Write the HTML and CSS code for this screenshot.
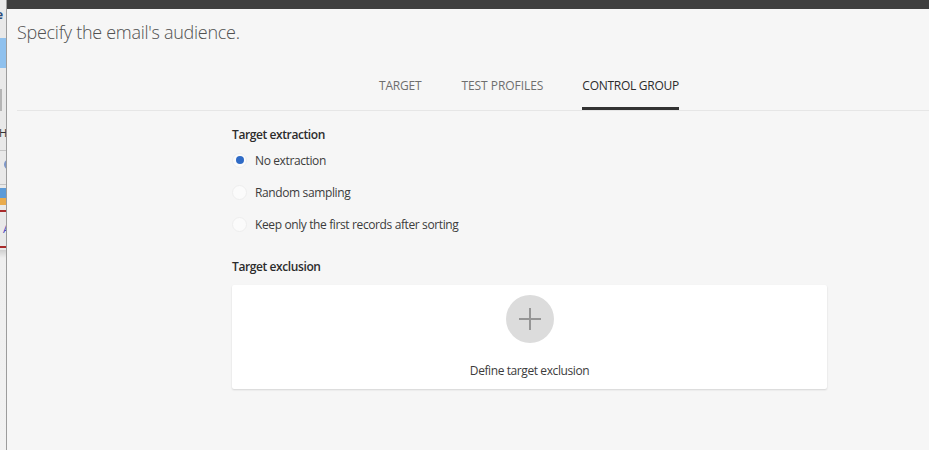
FILE: index.html
```html
<!DOCTYPE html>
<html lang="en">
<head>
<meta charset="utf-8">
<title>Specify the email's audience</title>
<link rel="stylesheet" href="styles.css">
</head>
<body>
<div class="page">
  <aside class="behind">
    <span class="b-glyph b-e">e</span>
    <div class="b-blue"></div>
    <div class="b-field"></div>
    <span class="b-glyph b-h">H</span>
    <div class="b-line b-l1"></div>
    <span class="b-dot"></span>
    <div class="b-line b-l2"></div>
    <div class="b-icon"></div>
    <div class="b-red b-r1"></div>
    <span class="b-glyph b-a">A</span>
    <div class="b-red b-r2"></div>
    <div class="b-lower"></div>
  </aside>
  <main class="dialog">
    <div class="topbar"></div>
    <header class="head">
      <h1 class="title">Specify the email's audience.</h1>
      <nav class="tabs">
        <a class="tab">TARGET</a>
        <a class="tab tab-wide">TEST PROFILES</a>
        <a class="tab active">CONTROL GROUP</a>
      </nav>
    </header>
    <section class="content">
      <h2 class="label">Target extraction</h2>
      <div class="radios">
        <label class="radio"><span class="dot on"></span>No extraction</label>
        <label class="radio"><span class="dot"></span>Random sampling</label>
        <label class="radio"><span class="dot"></span>Keep only the first records after sorting</label>
      </div>
      <h2 class="label second">Target exclusion</h2>
      <div class="card">
        <span class="plus">
          <svg width="24" height="24" viewBox="0 0 24 24"><path d="M12 1v22M1 12h22" stroke="#959595" stroke-width="2" fill="none"/></svg>
        </span>
        <span class="card-text">Define target exclusion</span>
      </div>
    </section>
  </main>
</div>
</body>
</html>
```
FILE: styles.css
```css
* { box-sizing: border-box; }
html, body { margin: 0; height: 100%; }
body { font-family: "Open Sans", "Noto Sans", sans-serif; color: #2c2c2c; background: #f6f6f6; overflow: hidden; }
.page { display: flex; height: 450px; width: 929px; }

.behind { position: relative; flex: 0 0 7px; background: #e9e9e9; overflow: hidden; border-right: 1px solid #9c9c9c; }
.b-glyph { position: absolute; font-size: 12px; line-height: 14px; color: #333; }
.b-e { left: -4px; top: 8px; color: #2a4a7a; font-weight: 700; }
.b-blue { position: absolute; left: 0; right: 0; top: 38px; height: 30px; background: #8fc1ee; }
.b-field { position: absolute; left: 0; width: 2px; top: 89px; height: 22px; background: #b5b5b5; }
.b-h { left: -1px; top: 126px; font-size: 11px; }
.b-line { position: absolute; left: 0; right: 0; height: 1px; background: #c4c4c4; }
.b-l1 { top: 150px; }
.b-l2 { top: 184px; }
.b-dot { position: absolute; left: 4px; top: 160px; width: 8px; height: 9px; border-radius: 50%; background: #7d96c8; }
.b-icon { position: absolute; left: 0; top: 188px; width: 6px; height: 17px; background: linear-gradient(#5c9bd8 60%, #e9ab4c 60%); }
.b-red { position: absolute; left: 0; right: 0; height: 2px; background: #a82a2a; }
.b-r1 { top: 210px; }
.b-r2 { top: 246px; }
.b-a { left: 3px; top: 222px; color: #4a4ac0; font-size: 11px; }
.b-lower { position: absolute; left: 0; right: 0; top: 250px; bottom: 0; background: linear-gradient(#cfcfcf, #efefef 8px, #f2f2f2); }

.dialog { flex: 1; min-width: 0; background: #f6f6f6; }
.topbar { height: 9px; background: #3f3f3f; }
.head { margin-left: 10px; height: 102px; border-bottom: 1px solid #e6e6e6; display: flex; flex-direction: column; }
.title { margin: 11px 0 0; font-size: 18px; line-height: 24px; font-weight: 300; color: #505050; letter-spacing: -0.28px; }
.tabs { display: flex; gap: 39px; margin: 34px 0 0 362px; }
.tab { font-size: 12px; line-height: 16px; height: 32px; color: #6e6e6e; border-bottom: 3px solid transparent; letter-spacing: -0.2px; }
.tab-wide { letter-spacing: -0.05px; margin-left: 1px; }
.tab.active { color: #2c2c2c; border-bottom-color: #323232; letter-spacing: -0.27px; }

.content { width: 595px; margin-left: 225px; display: flex; flex-direction: column; }
.label { margin: 15px 0 0; font-size: 12px; line-height: 17px; font-weight: 600; color: #2c2c2c; letter-spacing: -0.4px; }
.label.second { margin-top: 24px; }
.radios { display: flex; flex-direction: column; gap: 12px; margin-top: 7px; }
.radio { display: flex; align-items: center; gap: 8px; height: 20px; font-size: 12px; color: #3c3c3c; letter-spacing: -0.38px; }
.dot { width: 15px; height: 15px; border-radius: 50%; background: #fbfbfb; border: 1px solid #eeeeee; display: flex; align-items: center; justify-content: center; }
.dot.on::after { content: ""; width: 8px; height: 8px; border-radius: 50%; background: #2f6bc6; }
.card { margin-top: 10px; height: 104px; background: #fff; border-radius: 2px; box-shadow: 0 1px 2px rgba(0,0,0,.14); display: flex; flex-direction: column; align-items: center; }
.plus { margin-top: 10px; width: 48px; height: 48px; border-radius: 50%; background: #dcdcdc; display: flex; align-items: center; justify-content: center; }
.card-text { margin-top: 19px; font-size: 12px; line-height: 18px; color: #3c3c3c; letter-spacing: -0.41px; }
```
